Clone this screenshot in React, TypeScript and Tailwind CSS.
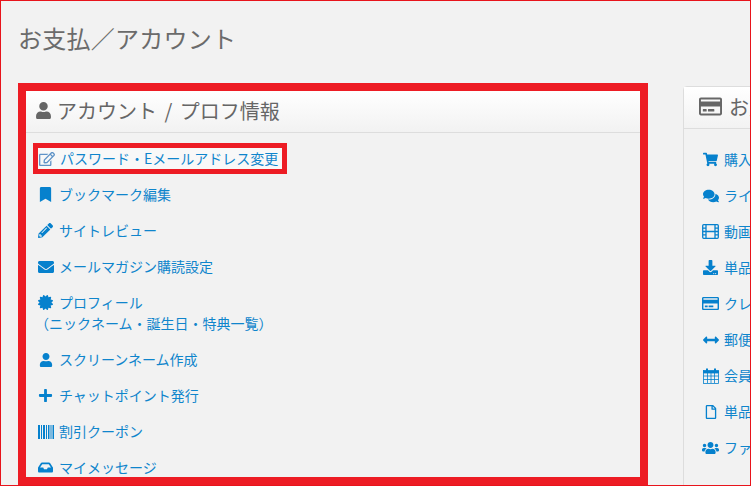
import type { ReactNode } from 'react';
import {
  FaArrowsAltH,
  FaBookmark,
  FaCertificate,
  FaComments,
  FaDownload,
  FaInbox,
  FaPencilAlt,
  FaPlus,
  FaRegCreditCard,
  FaRegEdit,
  FaRegFile,
  FaShoppingCart,
  FaUser,
  FaUsers,
  FaEnvelope,
} from 'react-icons/fa';

const font = { fontFamily: '"Noto Sans CJK JP", "Open Sans", sans-serif' };

function FilmIcon() {
  return (
    <svg width="17" height="15" viewBox="0 0 17 15" fill="none" stroke="currentColor" strokeWidth="1.3">
      <rect x="0.7" y="0.7" width="15.6" height="13.6" rx="1" />
      <path d="M4 1v13M13 1v13M1 4.2h3M1 7.5h3M1 10.8h3M13 4.2h3M13 7.5h3M13 10.8h3M4 7.5h9" />
    </svg>
  );
}

function CalendarIcon() {
  return (
    <svg width="16" height="16" viewBox="0 0 16 16" fill="none" stroke="currentColor" strokeWidth="0.8">
      <rect x="0.5" y="2.5" width="15" height="13" />
      <path d="M0.5 3h15v2h-15z" fill="currentColor" />
      <path d="M0.5 8h15M0.5 11.5h15M4.5 5v10M8 5v10M11.5 5v10" />
      <path d="M4 0.5v3M12 0.5v3" strokeWidth="2" />
    </svg>
  );
}

function BarcodeIcon() {
  return (
    <svg width="16" height="14" viewBox="0 0 16 14" fill="currentColor">
      <path d="M0 0h2v14H0zM3 0h1v14H3zM5 0h2v14H5zM8 0h1v14H8zM10 0h1.500v14H10zM12.500 0h1v14h-1zM14.500 0h1.500v14h-1.500z" />
    </svg>
  );
}

const accountLinks = [
  { icon: <FaBookmark size={15} />, label: 'ブックマーク編集' },
  { icon: <FaPencilAlt size={15} />, label: 'サイトレビュー' },
  { icon: <FaEnvelope size={16} />, label: 'メールマガジン購読設定' },
  { icon: <FaCertificate size={15} />, label: 'プロフィール', sub: '（ニックネーム・誕生日・特典一覧）' },
  { icon: <FaUser size={14} />, label: 'スクリーンネーム作成' },
  { icon: <FaPlus size={15} />, label: 'チャットポイント発行' },
  { icon: <BarcodeIcon />, label: '割引クーポン' },
  { icon: <FaInbox size={15} />, label: 'マイメッセージ' },
];

const paymentLinks = [
  { icon: <FaShoppingCart size={15} />, label: '購入履歴' },
  { icon: <FaComments size={16} />, label: 'ライブチャット履歴' },
  { icon: <FilmIcon />, label: '動画購入履歴' },
  { icon: <FaDownload size={15} />, label: '単品購入履歴' },
  { icon: <FaRegCreditCard size={17} />, label: 'クレジットカード情報' },
  { icon: <FaArrowsAltH size={16} />, label: '郵便振替' },
  { icon: <CalendarIcon />, label: '会員期間' },
  { icon: <FaRegFile size={14} />, label: '単品購入明細' },
  { icon: <FaUsers size={18} />, label: 'ファンクラブ' },
];

function Row({ icon, label, sub }: { icon: ReactNode; label: string; sub?: string }) {
  return (
    <li className="text-[14px] leading-[21px] whitespace-nowrap text-[#0f85cc]">
      <div className="flex items-center">
        <span className="flex w-[17px] flex-none justify-center text-[#0681cd]">{icon}</span>
        <span className="ml-[5px]">{label}</span>
      </div>
      {sub && <div className="-ml-[2px]">{sub}</div>}
    </li>
  );
}

function PanelHeader({ icon, title }: { icon: ReactNode; title: string }) {
  return (
    <div className="flex h-[42px] items-center border-b border-[#dddddd] bg-gradient-to-b from-white to-[#f2f2f2] pb-[2px] text-[20px] whitespace-nowrap text-[#666666] [word-spacing:3px]">
      {icon}
      <span>{title}</span>
    </div>
  );
}

export default function App() {
  return (
    <div
      style={font}
      className="h-[486px] w-[751px] overflow-hidden border border-[#e8141c] bg-[#f2f2f2] pl-[17px]"
    >
      <h1 className="h-[82px] pt-[19px] text-[24px] leading-[36px] font-normal tracking-[0.25px] text-[#6b6b6b]">
        お支払／アカウント
      </h1>

      <div className="flex items-start">
        {/* Left panel */}
        <section className="h-[402px] w-[630px] flex-none overflow-hidden border-8 border-[#ed1c24]">
          <PanelHeader
            title="アカウント / プロフ情報"
            icon={<FaUser size={17} className="mr-[5px] ml-[9px] text-[#666666]" />}
          />
          <ul className="flex flex-col gap-[15px] pt-[15px] pl-[11px]">
            <li className="-mb-[5px] -ml-[4px] -mt-[5px] inline-flex h-[31px] w-[254px] items-center border-[5px] border-[#ed1c24] bg-[#f8f8f8] text-[14px] whitespace-nowrap text-[#0f85cc]">
              <span className="flex w-[17px] flex-none justify-center text-[#5f93c7]">
                <FaRegEdit size={16} />
              </span>
              <span className="ml-[5px]">パスワード・Eメールアドレス変更</span>
            </li>
            {accountLinks.map((link) => (
              <Row key={link.label} {...link} />
            ))}
          </ul>
        </section>

        {/* Right panel, cut off by the window */}
        <section className="mt-[3px] ml-[35px] h-[400px] w-[300px] flex-none rounded-t-[4px] border border-[#dddddd]">
          <PanelHeader
            title="お支払い情報"
            icon={<FaRegCreditCard size={23} className="mr-[7px] ml-[15px] text-[#666666]" />}
          />
          <ul className="flex flex-col gap-[15px] pt-[20px] pl-[18px]">
            {paymentLinks.map((link) => (
              <Row key={link.label} {...link} />
            ))}
          </ul>
        </section>
      </div>
    </div>
  );
}
